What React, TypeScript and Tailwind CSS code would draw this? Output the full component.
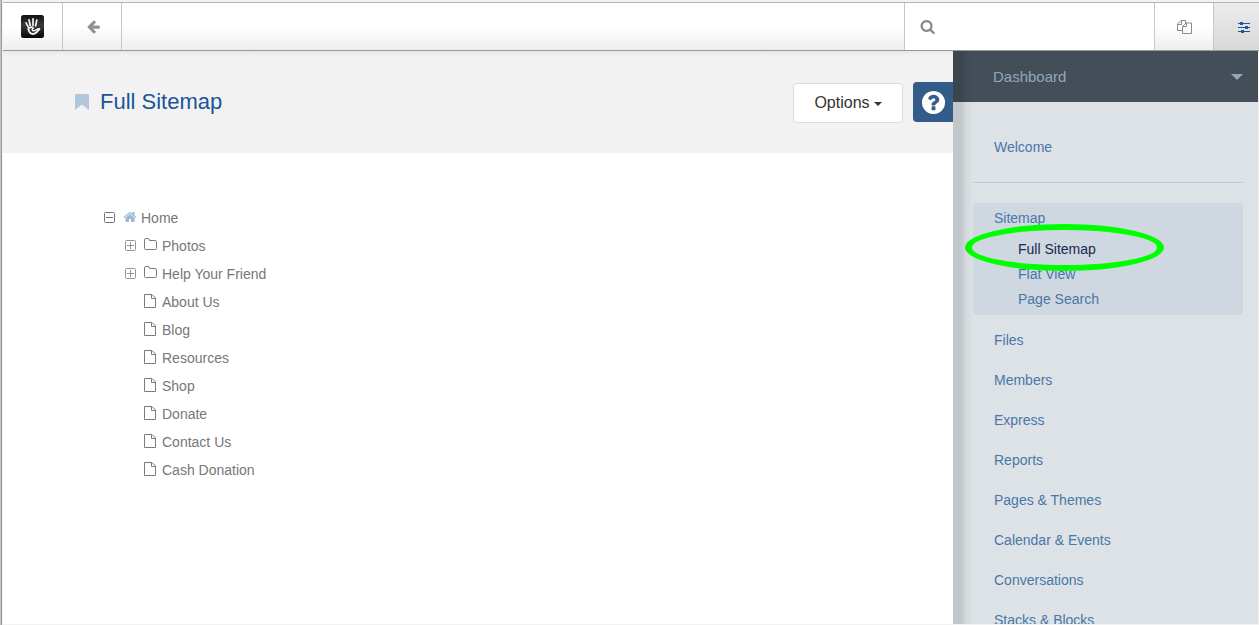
import type { ReactNode } from "react";

const pages = [
  { name: "Photos", folder: true },
  { name: "Help Your Friend", folder: true },
  { name: "About Us", folder: false },
  { name: "Blog", folder: false },
  { name: "Resources", folder: false },
  { name: "Shop", folder: false },
  { name: "Donate", folder: false },
  { name: "Contact Us", folder: false },
  { name: "Cash Donation", folder: false },
];

const sitemapLinks = ["Full Sitemap", "Flat View", "Page Search"];

const sections = [
  "Files",
  "Members",
  "Express",
  "Reports",
  "Pages & Themes",
  "Calendar & Events",
  "Conversations",
  "Stacks & Blocks",
];

function Glyph({ d, className }: { d: string; className: string }) {
  return (
    <svg viewBox="0 0 1792 1792" fill="currentColor" aria-hidden="true" className={className}>
      <path d={d} />
    </svg>
  );
}

const arrowLeft =
  "M1536 896v128q0 53-32.5 90.5t-84.5 37.5h-704l293 294q38 36 38 90t-38 90l-75 76q-37 37-90 37-52 0-91-37l-651-652q-37-37-37-90 0-52 37-91l651-650q38-38 91-38 52 0 90 38l75 74q38 38 38 91t-38 91l-293 293h704q52 0 84.5 37.5t32.5 90.5z";
const magnifier =
  "M1216 832q0-185-131.5-316.5t-316.5-131.5-316.5 131.5-131.5 316.5 131.5 316.5 316.5 131.5 316.5-131.5 131.5-316.5zm512 832q0 52-38 90t-90 38q-54 0-90-38l-343-342q-179 124-399 124-143 0-273.5-55.5t-225-150-150-225-55.5-273.5 55.5-273.5 150-225 225-150 273.5-55.5 273.5 55.5 225 150 150 225 55.5 273.5q0 220-124 399l343 343q37 37 37 90z";
const questionCircle =
  "M1024 1376v-192q0-14-9-23t-23-9h-192q-14 0-23 9t-9 23v192q0 14 9 23t23 9h192q14 0 23-9t9-23zm256-672q0-88-55.5-163t-138.5-116-170-41q-243 0-371 213-15 24 8 42l132 100q7 6 19 6 16 0 25-12 53-68 86-92 34-24 86-24 48 0 85.5 26t37.5 59q0 38-20 61t-68 45q-63 28-115.5 86.5t-52.5 125.5v36q0 14 9 23t23 9h192q14 0 23-9t9-23q0-19 21.5-49.5t54.5-49.5q32-18 49-28.5t46-35 44.5-48 28-60.5 12.5-81zm384 192q0 209-103 385.5t-279.5 279.5-385.5 103-385.5-103-279.5-279.5-103-385.5 103-385.5 279.5-279.5 385.5-103 385.5 103 279.5 279.5 103 385.5z";
const house =
  "M1472 992v480q0 26-19 45t-45 19h-384v-384h-256v384h-384q-26 0-45-19t-19-45v-480q0-1 .5-3t.5-3l575-474 575 474q1 2 1 6zm223-69l-62 74q-8 9-21 11h-3q-13 0-21-7l-692-577-692 577q-12 8-24 7-13-2-21-11l-62-74q-8-10-7-23.5t11-21.5l719-599q32-26 76-26t76 26l244 204v-195q0-14 9-23t23-9h192q14 0 23 9t9 23v408l219 182q10 8 11 21.5t-7 23.5z";

function HandLogo() {
  return (
    <svg viewBox="0 0 23 23" fill="none" aria-hidden="true" className="size-[23px]">
      <defs>
        <linearGradient id="logo" x1="0" y1="0" x2="0" y2="1">
          <stop offset="0" stopColor="#111" />
          <stop offset="0.45" stopColor="#3a3a3a" />
          <stop offset="1" stopColor="#050505" />
        </linearGradient>
      </defs>
      <rect width="23" height="23" rx="2.5" fill="url(#logo)" />
      <g stroke="#f4f4f4" strokeLinecap="round">
        <path d="M5 7.800 7.200 11.800M8 4.800 9.200 10.500M12 3.800V10.500M15.800 5 14.600 10.800" strokeWidth="1.700" />
        <path d="M7.400 13.500C7.800 17.200 9.600 19 12.200 19c3 0 3.600-2.800 6.200-4.800" strokeWidth="2" />
        <path d="M18.400 13.800C16.500 13.200 15 15.800 12.500 15.800c-1.800 0-1.700-2.200 0-2.800" strokeWidth="1.400" />
        <path d="M7.800 12.800 11 12.200" strokeWidth="1.800" />
      </g>
    </svg>
  );
}

function CopyIcon() {
  return (
    <svg viewBox="0 0 15 14" fill="none" stroke="#8a8a8a" aria-hidden="true" className="h-3.5 w-[15px]">
      <path d="M5.500 10.500h-5V4L4 .5h4.500V3M.5 4.500h4V.5" />
      <path d="M5.500 6.500 9 3h5.500v10.500h-9zM5.500 6.500h4V3" />
    </svg>
  );
}

function SlidersIcon() {
  return (
    <svg viewBox="0 0 12 12" fill="#1b5899" aria-hidden="true" className="size-3">
      <path d="M0 1h12v1H0zM0 5h12v1H0zM0 9h12v1H0z" />
      <path d="M2 0h3v3H2zM7 4h3v3H7zM3 8h3v3H3z" />
    </svg>
  );
}

function Toggle({ label, open }: { label: string; open?: boolean }) {
  return (
    <button type="button" aria-label={label} aria-expanded={!!open} className={open ? "text-[#747474]" : "text-[#949494]"}>
      <svg viewBox="0 0 11 11" fill="none" stroke="currentColor" className="size-[11px]">
        <rect x="0.5" y="0.5" width="10" height="10" rx="1" />
        <path d={open ? "M2 5.500h7" : "M2 5.500h7M5.500 2v7"} />
      </svg>
    </button>
  );
}

function PageIcon({ folder }: { folder: boolean }) {
  return (
    <svg viewBox="0 0 14 14" fill="none" stroke="#7c7c7c" aria-hidden="true" className="size-3.5">
      {folder ? (
        <path d="M.5 10.500V2Q.5.5 2 .5h2q1.500 0 1.500 2H11q1.500 0 1.500 1.500v6.500q0 1-1 1h-10q-1 0-1-1z" />
      ) : (
        <path d="M.5.5h7.500L11.500 4v9.500H.5zM7.500.5v4h4" />
      )}
    </svg>
  );
}

function TreeRow({ toggle, icon, name }: { toggle?: ReactNode; icon: ReactNode; name: string }) {
  return (
    <div className="flex h-7 items-center">
      <span className="mr-2 flex w-[11px] pb-0.5">{toggle}</span>
      <span className="mr-1 flex w-3.5 pb-0.5">{icon}</span>
      <a href="#" className="text-[#777777]">
        {name}
      </a>
    </div>
  );
}

function Toolbar() {
  return (
    <header className="flex h-[49px] shrink-0 border-y border-t-[#b4b4b4] border-b-[#999999] bg-linear-to-b from-white from-50% to-[#eeeeee]">
      <a href="#" aria-label="Home" className="flex w-[60px] items-center justify-center border-r border-[#c8c8c8]">
        <HandLogo />
      </a>
      <button type="button" aria-label="Back" className="flex w-[59px] items-center border-r border-[#c8c8c8] pl-6 text-[#929292]">
        <Glyph d={arrowLeft} className="size-[15px]" />
      </button>
      <div className="flex-1" />
      <label className="flex w-[250px] items-center border-l border-[#c8c8c8] bg-white pl-[15px] text-[#888888]">
        <Glyph d={magnifier} className="size-[17px]" />
        <input type="search" aria-label="Search" className="ml-2 h-full w-full min-w-0 text-sm outline-none" />
      </label>
      <button type="button" aria-label="Pages" className="flex w-[60px] items-center justify-center border-x border-[#c8c8c8]">
        <CopyIcon />
      </button>
      <button type="button" aria-label="Dashboard" className="flex w-[45px] items-center bg-linear-to-b from-[#ececec] to-[#d8d8d8] pt-0.5 pl-6">
        <SlidersIcon />
      </button>
    </header>
  );
}

function Sidebar() {
  return (
    <aside className="relative flex w-[306px] shrink-0 flex-col overflow-hidden border-r border-[#f0f0f0] bg-[#dde2e6] text-sm">
      <button type="button" className="flex h-[51px] shrink-0 items-center justify-between bg-[#434e59] pr-[15px] pl-10 text-[15px] text-[#93a7bb]">
        Dashboard
        <svg viewBox="0 0 12 6" fill="currentColor" aria-hidden="true" className="h-1.5 w-3">
          <path d="M0 0h12L6 6z" />
        </svg>
      </button>
      <nav className="pt-[25px] pr-[15px] pl-5 text-[#4877a8]">
        <a href="#" className="block h-10 pl-[21px] leading-10">
          Welcome
        </a>
        <hr className="mt-[15px] mb-5 border-[#c5cacf]" />
        <div className="relative rounded bg-[#cfd7e1] pb-[3px]">
          <a href="#" className="block h-[30px] pl-[21px] leading-[30px]">
            Sitemap
          </a>
          <ul className="mt-1">
            {sitemapLinks.map((link) => (
              <li key={link} className="h-[25px] pl-[45px] leading-[25px]">
                <a href="#" className={link === "Full Sitemap" ? "text-[#132b4b]" : ""}>
                  {link}
                </a>
              </li>
            ))}
          </ul>
          <svg viewBox="0 0 199 47" fill="none" aria-hidden="true" className="pointer-events-none absolute top-[21px] -left-2 h-[47px] w-[199px]">
            <path
              d="M0 23.500a99.500 23.500 0 0 1 199 0a99.500 23.500 0 0 1-199 0zM7 23.500a92.500 17.500 0 0 0 185 0a92.500 17.500 0 0 0-185 0z"
              fill="#00ff00"
            />
          </svg>
        </div>
        <ul className="mt-[5px]">
          {sections.map((section) => (
            <li key={section} className="h-10 pl-[21px] leading-10">
              <a href="#">{section}</a>
            </li>
          ))}
        </ul>
      </nav>
      <div className="pointer-events-none absolute inset-y-0 left-0 w-5 bg-linear-to-r from-black/12 from-40% via-black/4 via-65% to-transparent" />
    </aside>
  );
}

export default function App() {
  return (
    <div className="h-screen overflow-hidden border-l border-[#c4c4c4] bg-[#f2f2f2] font-['Liberation_Sans',Arial,sans-serif]">
      <div className="flex h-full flex-col border-l border-[#999999] pt-0.5 pb-px pl-px">
        <Toolbar />
        <div className="flex min-h-0 flex-1">
          <main className="min-w-0 flex-1 bg-white">
            <div className="flex h-[102px] items-center bg-[#f2f2f2] pl-[72px] shadow-[inset_0_4px_4px_-3px_rgba(0,0,0,0.08)]">
              <svg viewBox="0 0 14 16" fill="#b3c7dc" aria-hidden="true" className="h-4 w-3.5">
                <path d="M1 0h12q1 0 1 1v15L7 10.500 0 16V1Q0 0 1 0z" />
              </svg>
              <h1 className="ml-[11px] flex-1 pb-0.5 text-[22px] text-[#1b5499]">Full Sitemap</h1>
              <button type="button" className="mt-0.5 flex h-10 w-[110px] items-center justify-center gap-1 rounded-sm border border-[#dcdcdc] bg-white text-base text-[#333333]">
                Options
                <svg viewBox="0 0 8 4" fill="currentColor" aria-hidden="true" className="mt-0.5 h-1 w-2">
                  <path d="M0 0h8L4 4z" />
                </svg>
              </button>
              <button type="button" aria-label="Help" className="ml-2.5 flex size-10 items-center justify-center rounded-l-sm bg-[#335c8a] text-white">
                <Glyph d={questionCircle} className="size-[27px]" />
              </button>
            </div>
            <div className="pt-[51px] pl-[101px] text-sm">
              <TreeRow
                toggle={<Toggle label="Collapse Home" open />}
                icon={<Glyph d={house} className="size-3.5 text-[#9cb8d6]" />}
                name="Home"
              />
              <ul className="pl-[21px]">
                {pages.map((page) => (
                  <li key={page.name}>
                    <TreeRow
                      toggle={page.folder && <Toggle label={`Expand ${page.name}`} />}
                      icon={<PageIcon folder={page.folder} />}
                      name={page.name}
                    />
                  </li>
                ))}
              </ul>
            </div>
          </main>
          <Sidebar />
        </div>
      </div>
    </div>
  );
}
